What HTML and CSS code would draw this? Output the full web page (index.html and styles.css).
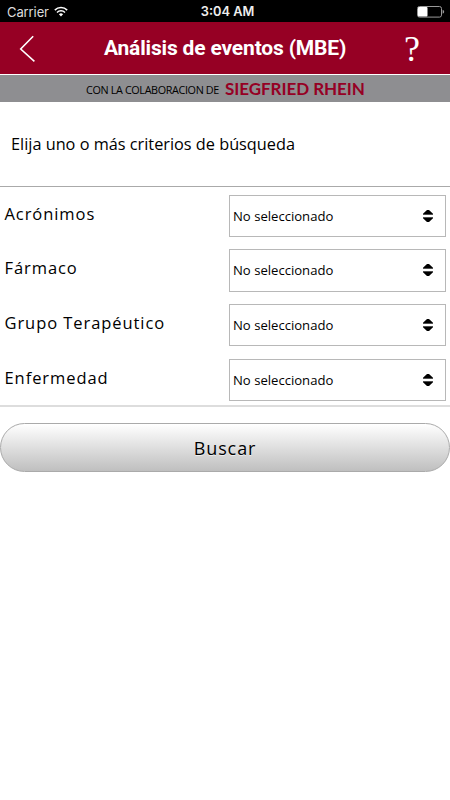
FILE: index.html
```html
<!DOCTYPE html>
<html lang="es">
<head>
<meta charset="utf-8">
<title>Análisis de eventos (MBE)</title>
<link rel="stylesheet" href="styles.css">
</head>
<body>
<div class="status">
  <div class="carrier"><span>Carrier</span>
    <svg width="14" height="11" viewBox="0 0 14 11" fill="none" stroke="#fff" stroke-width="1.5"><path d="M.8 4.1a8.8 8.8 0 0 1 12.4 0M3 6.5a5.7 5.7 0 0 1 8 0"/><path d="M7 10.4 4.9 8.3a3 3 0 0 1 4.2 0z" fill="#fff" stroke="none"/></svg>
  </div>
  <div class="time">3:04 AM</div>
  <svg class="battery" width="28" height="12" viewBox="0 0 28 12"><rect x=".5" y=".5" width="24" height="10.6" rx="2" fill="none" stroke="#999"/><rect x="1" y="1" width="9.5" height="9.6" rx="1" fill="#fff"/><path d="M25.6 3.8q1.6.5 1.6 2t-1.6 2z" fill="#999"/></svg>
</div>
<header class="header">
  <svg class="back" width="17" height="28" viewBox="0 0 17 28" fill="none" stroke="#fff" stroke-width="1.6"><path d="M14.2 1.2 1.7 14 15.4 26.4"/></svg>
  <h1>Análisis de eventos (MBE)</h1>
  <div class="help">?</div>
</header>
<div class="sponsor"><span class="with">CON LA COLABORACION DE</span><span class="brand">SIEGFRIED RHEIN</span></div>
<p class="intro">Elija uno o más criterios de búsqueda</p>
<main class="form">
  <div class="row"><div class="label">Acrónimos</div><div class="select"><span>No seleccionado</span><svg width="12" height="14" viewBox="0 0 12 14"><path d="M1 5.7v-1L5 .9h2l4 3.8v1zM1 8.3v1l4 3.8h2l4-3.8v-1z"/><path d="M1 5.5h10M1 8.5h10" stroke="#555" stroke-width=".8"/></svg></div></div>
  <div class="row"><div class="label">Fármaco</div><div class="select"><span>No seleccionado</span><svg width="12" height="14" viewBox="0 0 12 14"><path d="M1 5.7v-1L5 .9h2l4 3.8v1zM1 8.3v1l4 3.8h2l4-3.8v-1z"/><path d="M1 5.5h10M1 8.5h10" stroke="#555" stroke-width=".8"/></svg></div></div>
  <div class="row"><div class="label">Grupo Terapéutico</div><div class="select"><span>No seleccionado</span><svg width="12" height="14" viewBox="0 0 12 14"><path d="M1 5.7v-1L5 .9h2l4 3.8v1zM1 8.3v1l4 3.8h2l4-3.8v-1z"/><path d="M1 5.5h10M1 8.5h10" stroke="#555" stroke-width=".8"/></svg></div></div>
  <div class="row"><div class="label">Enfermedad</div><div class="select"><span>No seleccionado</span><svg width="12" height="14" viewBox="0 0 12 14"><path d="M1 5.7v-1L5 .9h2l4 3.8v1zM1 8.3v1l4 3.8h2l4-3.8v-1z"/><path d="M1 5.5h10M1 8.5h10" stroke="#555" stroke-width=".8"/></svg></div></div>
</main>
<button class="search">Buscar</button>
</body>
</html>
```
FILE: styles.css
```css
* { box-sizing: border-box; }
body { margin: 0; background: #fff; color: #000; font-family: "Open Sans", sans-serif; white-space: nowrap; }
svg { display: block; flex: none; }
.status { height: 22px; background: #000; color: #fff; display: grid; grid-template-columns: 1fr auto 1fr; align-items: center; padding: 0 5px 0 7px; font: 13px/22px Inter, sans-serif; }
.carrier { display: flex; align-items: center; gap: 5px; color: #ddd; letter-spacing: -.1px; }
.time { font-weight: 600; font-size: 12.8px; color: #eee; padding: 1px 0 0 3px; }
.battery { justify-self: end; }
.header { height: 52px; background: #960024; color: #fff; display: grid; grid-template-columns: 60px 1fr 60px; align-items: center; }
.back { margin: 2px 0 0 19px; }
.header h1 { margin: 0; text-align: center; font: bold 21px/51px Roboto, sans-serif; letter-spacing: -.17px; }
.help { font: 36px/52px "Liberation Serif", serif; padding: 1px 0 0 14px; height: 52px; }
.sponsor { height: 28px; border-top: 1px solid #fff; background: #8e8e91; display: flex; align-items: center; padding-left: 86px; gap: 6px; }
.with { font-size: 10.8px; letter-spacing: -.36px; padding-top: 2px; width: 133px; }
.brand { font: bold 17px/27px Lato, sans-serif; letter-spacing: -.05px; color: #960024; }
.intro { margin: 0; height: 84px; padding-left: 11px; font-size: 16.3px; line-height: 84px; }
.form { height: 221px; border-top: 1px solid #aaa; border-bottom: 2px solid #ddd; padding: 7.5px 4px 0; display: grid; grid-auto-rows: 43px; row-gap: 11.7px; align-content: start; }
.row { display: flex; justify-content: space-between; }
.label { font-size: 16.5px; letter-spacing: .93px; line-height: 38px; padding-left: .5px; }
.select { width: 217px; height: 42.5px; border: 1px solid #b8b8b8; display: flex; justify-content: space-between; align-items: center; padding: 0 11px 0 3px; font-size: 13.1px; }
.search { display: block; width: 450px; height: 49px; margin: 16px 0 0; padding: 0; border: 1px solid #aaa; border-radius: 25px; background: linear-gradient(#fff, #bfbfbf); font: 18px "Open Sans", sans-serif; letter-spacing: .9px; color: #000; text-shadow: 0 1px #eee; }
```
